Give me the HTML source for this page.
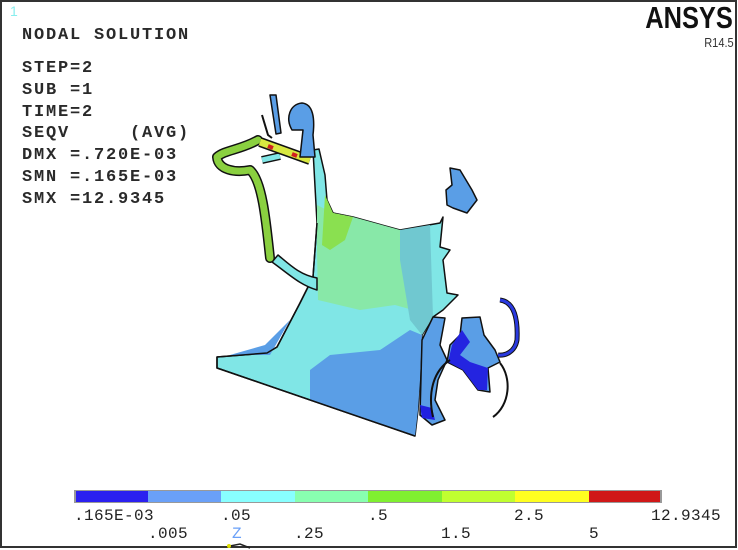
<!DOCTYPE html>
<html><head><meta charset="utf-8"><style>
html,body{margin:0;padding:0;background:#fff}
#w{position:relative;width:738px;height:550px;overflow:hidden;background:#fff}
.t{position:absolute;font-family:"Liberation Mono",monospace;font-size:17px;font-weight:bold;color:#2a2a2a;letter-spacing:1.8px;white-space:pre;line-height:21.8px}
.l{position:absolute;font-family:"Liberation Mono",monospace;font-size:16px;color:#222;letter-spacing:0.4px;white-space:pre;line-height:16px}
</style></head><body><div id="w">
<svg width="738" height="550" style="position:absolute;left:0;top:0">
<rect x="1" y="1" width="735" height="546" fill="none" stroke="#333" stroke-width="2"/>
<g stroke="#111" stroke-width="1.5" stroke-linejoin="round">
<path d="M313,150 L319,149 L325,175 L327,200 L333,213 L353,217 L400,230 L440,223 L443,217 L440,247 L450,250 L443,260 L447,293 L458,295 L443,310 L433,317 L422,335 L420,380 L418,410 L415,436 L217,368 L217,357 L267,353 L277,347 L300,303 L313,277 L317,223 Z" fill="#80e6e6"/>
<path d="M317,205 L333,213 L353,217 L400,230 L413,245 L418,280 L413,310 L395,305 L360,310 L318,300 L317,250 Z" fill="#88e8a8" stroke="none"/>
<path d="M325,195 L333,213 L353,217 L345,240 L330,250 L322,245 Z" fill="#8ae050" stroke="none"/>
<path d="M310,370 L330,355 L380,350 L410,330 L422,335 L420,380 L418,410 L415,436 L310,400 Z" fill="#5a9ee6" stroke="none"/>
<path d="M230,355 L265,345 L290,320 L270,355 Z" fill="#5a9ee6" stroke="none"/>
<path d="M400,230 L430,225 L433,317 L422,335 L410,320 L400,260 Z" fill="#70c8d0" stroke="none"/>
<path d="M415,436 L217,368 L217,357 L267,353 L277,347 L300,303 L313,277 L317,223" fill="none"/>
<path d="M433,317 L445,318 L440,345 L447,360 L438,380 L435,400 L445,420 L432,425 L420,415 L422,340 Z" fill="#5a9ee6"/>
<path d="M420,405 L432,408 L435,420 L422,418 Z" fill="#2020e0" stroke="none"/>
<path d="M450,168 L460,170 L472,190 L477,200 L467,213 L453,208 L447,205 L446,190 L452,185 Z" fill="#5a9ee6"/>
<path d="M462,318 L480,317 L484,335 L495,350 L500,362 L488,368 L490,392 L478,390 L463,370 L447,362 L450,345 L460,335 Z" fill="#5a9ee6"/>
<path d="M462,330 L470,342 L460,355 L470,362 L488,368 L487,390 L478,390 L463,370 L448,362 L452,345 Z" fill="#2424e0" stroke="none"/>
<path d="M500,300 C515,302 518,320 517,340 C515,352 505,356 498,355" fill="none" stroke="#111" stroke-width="5"/>
<path d="M500,300 C515,302 518,320 517,340 C515,352 505,356 498,355" fill="none" stroke="#2a3ae0" stroke-width="3"/>
<path d="M500,363 C512,378 510,405 493,417" fill="none" stroke="#111" stroke-width="2"/>
<path d="M450,360 C432,372 428,395 433,417" fill="none" stroke="#111" stroke-width="2"/>
<path d="M272,262 C290,275 300,285 317,290 L317,278 C300,275 290,265 278,255 Z" fill="#80e6e6"/>
<path d="M258,140 C240,150 225,150 217,157 C218,170 235,173 250,170 C262,180 266,220 270,258" fill="none" stroke="#111" stroke-width="10" stroke-linecap="round"/>
<path d="M258,140 C240,150 225,150 217,157 C218,170 235,173 250,170 C262,180 266,220 270,258" fill="none" stroke="#8ad040" stroke-width="7" stroke-linecap="round"/>
<path d="M262,160 L280,156" stroke="#111" stroke-width="8"/>
<path d="M262,160 L280,156" stroke="#80e6e6" stroke-width="5"/>
<path d="M260,142 L310,160" stroke="#111" stroke-width="10"/>
<path d="M260,142 L310,160" stroke="#d8e840" stroke-width="7"/>
<path d="M268,146 L273,148 M292,154 L297,156" stroke="#d02020" stroke-width="4"/>
<path d="M300,157 L303,130 L292,130 C285,118 290,104 302,103 C313,104 315,118 313,135 L315,157 Z" fill="#5a9ee6"/>
<path d="M270,95 L276,95 L281,133 L276,134 Z" fill="#5a9ee6"/>
<path d="M262,115 L268,135 L272,138" fill="none" stroke="#111" stroke-width="2"/>
</g>
<rect x="74" y="490" width="588" height="13" fill="#999"/>
<rect x="76" y="491" width="72" height="11" fill="#2b20f0"/>
<rect x="148" y="491" width="73" height="11" fill="#6aa0f8"/>
<rect x="221" y="491" width="74" height="11" fill="#88ffff"/>
<rect x="295" y="491" width="73" height="11" fill="#88ffb0"/>
<rect x="368" y="491" width="74" height="11" fill="#80f030"/>
<rect x="442" y="491" width="73" height="11" fill="#c0ff30"/>
<rect x="515" y="491" width="74" height="11" fill="#ffff20"/>
<rect x="589" y="491" width="71" height="11" fill="#d01818"/>
<path d="M230,546 L240,544 L250,548" stroke="#222" stroke-width="1.5" fill="none"/>
<circle cx="229" cy="546" r="2" fill="#dd0"/>
</svg>
<div style="position:absolute;left:10px;top:3px;font-family:'Liberation Sans',sans-serif;font-size:14px;color:#8ee">1</div>
<div class="t" style="left:22px;top:25px">NODAL SOLUTION</div>
<div class="t" style="left:22px;top:58px">STEP=2
SUB =1
TIME=2
SEQV     (AVG)
DMX =.720E-03
SMN =.165E-03
SMX =12.9345</div>
<div style="position:absolute;right:5px;top:1px;font-family:'Liberation Sans',sans-serif;font-weight:bold;font-size:31px;color:#111;line-height:34px;transform:scaleX(0.82);transform-origin:right top">ANSYS</div>
<div style="position:absolute;right:4px;top:35px;font-family:'Liberation Sans',sans-serif;font-size:13px;color:#333;transform:scaleX(0.85);transform-origin:right top">R14.5</div>
<div class="l" style="left:74px;top:508px">.165E-03</div>
<div class="l" style="left:221px;top:508px">.05</div>
<div class="l" style="left:368px;top:508px">.5</div>
<div class="l" style="left:514px;top:508px">2.5</div>
<div class="l" style="left:651px;top:508px">12.9345</div>
<div class="l" style="left:148px;top:526px">.005</div>
<div class="l" style="left:294px;top:526px">.25</div>
<div class="l" style="left:441px;top:526px">1.5</div>
<div class="l" style="left:589px;top:526px">5</div>
<div class="l" style="left:232px;top:526px;color:#6aa0f8">Z</div>
</div></body></html>
